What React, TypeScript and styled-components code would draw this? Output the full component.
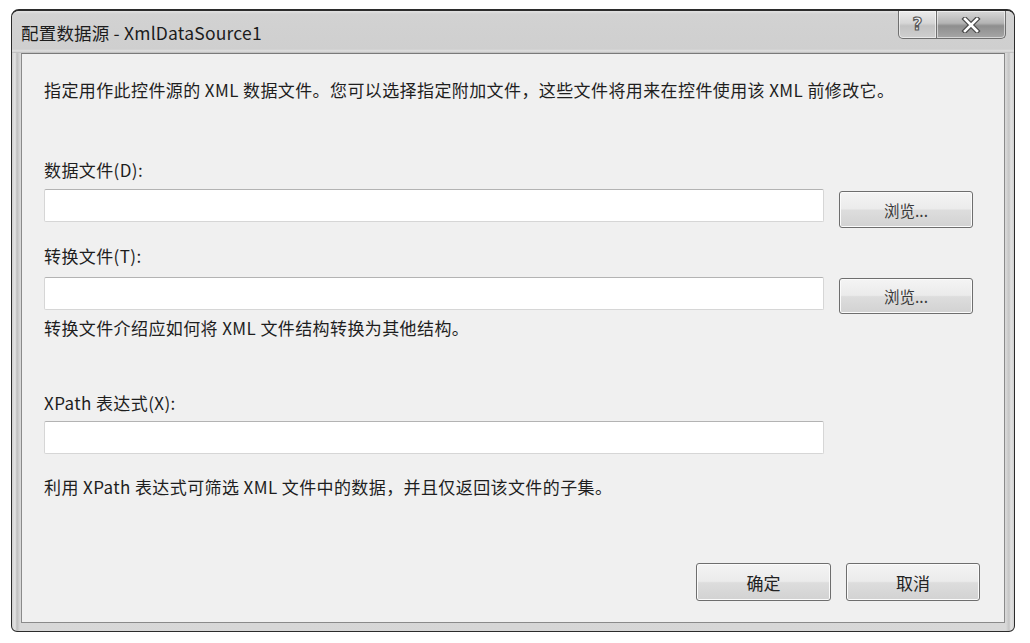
import React from "react";
import styled, { createGlobalStyle } from "styled-components";

const Global = createGlobalStyle`
  html, body { margin: 0; padding: 0; background: #ffffff; }
  body { font-family: "Noto Sans CJK SC", "Noto Sans", sans-serif; }
  * { box-sizing: border-box; }
`;

const Window = styled.div`
  margin: 9px 0 0 11px;
  width: 1004px;
  height: 623px;
  border: 1px solid #2b2b2b;
  border-top-width: 2px;
  border-radius: 8px 8px 6px 6px;
  background: linear-gradient(90deg, #cfcfcf 0px, #e4e4e4 3px, #bdbdbd 5px, #d8d8d8 8px, #d6d6d6 50%, #d8d8d8 calc(100% - 8px), #c4c4c4 calc(100% - 5px), #e2e2e2 calc(100% - 3px), #cfcfcf 100%);
  display: flex;
  flex-direction: column;
  padding: 0 9px 8px 9px;
  box-shadow: inset 0 1px 0 #f0f0f0;
`;

const TitleBar = styled.div`
  height: 42px;
  display: flex;
  align-items: flex-start;
  justify-content: space-between;
  margin: 0 -9px;
  padding: 0 8px 0 9px;
  background: linear-gradient(180deg, #e2e2e2 0px, #d2d2d2 3px, #cfcfcf 38px, #e0e0e0 40px, #b9b9b9 42px);
  border-radius: 7px 7px 0 0;
`;

const Title = styled.div`
  font-size: 17.5px;
  line-height: 24px;
  margin-top: 10px;
  color: #1c1c1c;
  letter-spacing: 0.2px;
`;

const Caption = styled.div`
  display: flex;
`;

const CapButton = styled.div<{ $close?: boolean }>`
  width: ${(p) => (p.$close ? "69px" : "39px")};
  height: 28px;
  display: flex;
  align-items: center;
  justify-content: center;
  border: 1px solid #6f6f6f;
  border-top: none;
  border-left-width: ${(p) => (p.$close ? "0" : "1px")};
  border-radius: ${(p) => (p.$close ? "0 0 5px 0" : "0 0 0 5px")};
  background: ${(p) =>
    p.$close
      ? "linear-gradient(180deg, #d8d8d8 0%, #b4b4b4 45%, #8e8e8e 55%, #a6a6a6 100%)"
      : "linear-gradient(180deg, #ececec 0%, #d6d6d6 45%, #c2c2c2 55%, #cfcfcf 100%)"};
  box-shadow: inset 0 0 0 1px rgba(255, 255, 255, 0.55);
`;

const QMark = styled.span`
  font-family: "DejaVu Sans", sans-serif;
  font-weight: bold;
  font-size: 17px;
  line-height: 1;
  color: #f4f4f4;
  -webkit-text-stroke: 1.2px #5a5a5a;
  margin-top: -1px;
`;

const Content = styled.div`
  flex: 1;
  background: #f0f0f0;
  border: 1px solid #8a8a8a;
  border-top-color: #7a7a7a;
  display: flex;
  flex-direction: column;
  padding: 0 24px 21px 22px;
`;

const Text = styled.div<{ $top: number }>`
  margin-top: ${(p) => p.$top}px;
  font-size: 17px;
  line-height: 24px;
  color: #1e1e1e;
  letter-spacing: 0.4px;
  white-space: nowrap;
`;

const FieldRow = styled.div<{ $top: number }>`
  margin-top: ${(p) => p.$top}px;
  display: flex;
  align-items: flex-start;
  gap: 15px;
`;

const Input = styled.div`
  width: 780px;
  height: 33px;
  background: #ffffff;
  border: 1px solid #d6d6d6;
  border-top-color: #b3b3b3;
  border-radius: 2px;
`;

const PushButton = styled.button<{ $w: number; $h: number; $off?: number }>`
  width: ${(p) => p.$w}px;
  height: ${(p) => p.$h}px;
  margin-top: ${(p) => p.$off ?? 0}px;
  border: 1px solid #6e6e6e;
  border-radius: 3px;
  background: linear-gradient(180deg, #f4f4f4 0%, #ebebeb 48%, #dddddd 52%, #d2d2d2 100%);
  box-shadow: inset 0 0 0 1px #fbfbfb;
  font-family: "Noto Sans CJK SC", "Noto Sans", sans-serif;
  font-size: ${(p) => (p.$h > 37 ? 17 : 15.5)}px;
  color: ${(p) => (p.$h > 37 ? "#222" : "#3a3a3a")};
  padding: 0;
  display: flex;
  align-items: center;
  justify-content: center;
`;

const Footer = styled.div`
  margin-top: auto;
  display: flex;
  justify-content: flex-end;
  gap: 15px;
`;

export default function App() {
  return (
    <>
      <Global />
      <Window>
        <TitleBar>
          <Title>配置数据源 - XmlDataSource1</Title>
          <Caption>
            <CapButton>
              <QMark>?</QMark>
            </CapButton>
            <CapButton $close>
              <svg width="20" height="16" viewBox="0 0 20 16">
                <path d="M4 2 L16 14 M16 2 L4 14" stroke="#4a4a4a" strokeWidth="5" strokeLinecap="square" />
                <path d="M4 2 L16 14 M16 2 L4 14" stroke="#ffffff" strokeWidth="2.6" strokeLinecap="square" />
              </svg>
            </CapButton>
          </Caption>
        </TitleBar>
        <Content>
          <Text $top={24}>
            指定用作此控件源的 XML 数据文件。您可以选择指定附加文件，这些文件将用来在控件使用该 XML 前修改它。
          </Text>
          <Text $top={56}>数据文件(D):</Text>
          <FieldRow $top={7}>
            <Input />
            <PushButton $w={134} $h={37} $off={2}>
              浏览...
            </PushButton>
          </FieldRow>
          <Text $top={16}>转换文件(T):</Text>
          <FieldRow $top={9}>
            <Input />
            <PushButton $w={134} $h={36} $off={1}>
              浏览...
            </PushButton>
          </FieldRow>
          <Text $top={2}>转换文件介绍应如何将 XML 文件结构转换为其他结构。</Text>
          <Text $top={51}>XPath 表达式(X):</Text>
          <FieldRow $top={6}>
            <Input />
          </FieldRow>
          <Text $top={21}>利用 XPath 表达式可筛选 XML 文件中的数据，并且仅返回该文件的子集。</Text>
          <Footer>
            <PushButton $w={135} $h={38}>
              确定
            </PushButton>
            <PushButton $w={134} $h={38}>
              取消
            </PushButton>
          </Footer>
        </Content>
      </Window>
    </>
  );
}
